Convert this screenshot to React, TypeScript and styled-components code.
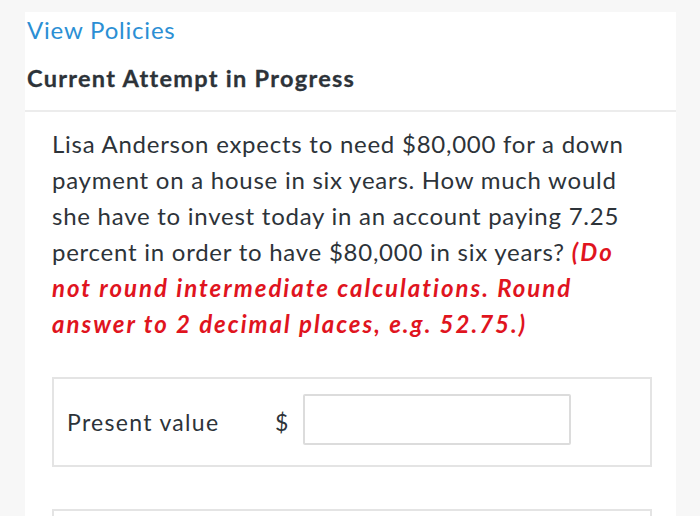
import styled, { createGlobalStyle } from "styled-components";

const GlobalStyle = createGlobalStyle`
  html, body {
    margin: 0;
    padding: 0;
    background: #f7f7f7;
  }
  body {
    font-family: Lato, "Liberation Sans", sans-serif;
    color: #2d3339;
  }
`;

export default function App() {
  return (
    <>
      <GlobalStyle />
      <Page>
        <Panel>
          <Header>
            <PolicyLink href="#">View Policies</PolicyLink>
            <Title>Current Attempt in Progress</Title>
          </Header>
          <Body>
            <Question>
              Lisa Anderson expects to need $80,000 for a down payment on a
              house in six years. How much would she have to invest today in an
              account paying 7.25 percent in order to have $80,000 in six years?{" "}
              <Hint>
                (Do not round intermediate calculations. Round answer to 2
                decimal places, e.g. 52.75.)
              </Hint>
            </Question>
            <AnswerBox>
              <FieldLabel>Present value</FieldLabel>
              <Currency>$</Currency>
              <AnswerInput type="text" />
            </AnswerBox>
            <NextBox />
          </Body>
        </Panel>
      </Page>
    </>
  );
}

const Page = styled.div`
  padding: 12px 24px 0 25px;
  height: 516px;
  box-sizing: border-box;
  overflow: hidden;
`;

const Panel = styled.div`
  background: #fff;
  min-height: 100%;
`;

const Header = styled.div`
  padding: 3px 0 0 2px;
  height: 95px;
  border-bottom: 2px solid #ececec;
`;

const PolicyLink = styled.a`
  display: block;
  font-size: 24px;
  line-height: 30px;
  letter-spacing: 0.8px;
  color: #2b8fd4;
  text-decoration: none;
`;

const Title = styled.h2`
  margin: 18px 0 0;
  font-size: 23.5px;
  line-height: 30px;
  font-weight: 700;
  letter-spacing: 1.3px;
  color: #2d3339;
  -webkit-text-stroke: 0.3px #2d3339;
`;

const Body = styled.div`
  padding: 14px 24px 0 27px;
`;

const Question = styled.p`
  margin: 0;
  font-size: 24px;
  line-height: 36px;
  letter-spacing: 0.75px;
  color: #2d3339;
`;

const Hint = styled.span`
  color: #e0141e;
  font-weight: 700;
  font-style: italic;
  letter-spacing: 2px;
`;

const AnswerBox = styled.div`
  margin-top: 35px;
  height: 86px;
  border: 2px solid #e4e4e4;
  display: flex;
  align-items: center;
  padding: 0 0 0 13px;
`;

const FieldLabel = styled.span`
  font-size: 23px;
  letter-spacing: 1.3px;
  color: #2d3339;
  width: 208px;
`;

const Currency = styled.span`
  font-size: 23px;
  color: #2d3339;
  margin-right: 15px;
`;

const AnswerInput = styled.input`
  width: 268px;
  height: 51px;
  box-sizing: border-box;
  border: 2px solid #dcdcdc;
  border-radius: 2px;
  background: #fff;
  margin-top: -6px;
  outline: none;
`;

const NextBox = styled.div`
  margin-top: 42px;
  height: 40px;
  border: 2px solid #e4e4e4;
  border-bottom: none;
`;
